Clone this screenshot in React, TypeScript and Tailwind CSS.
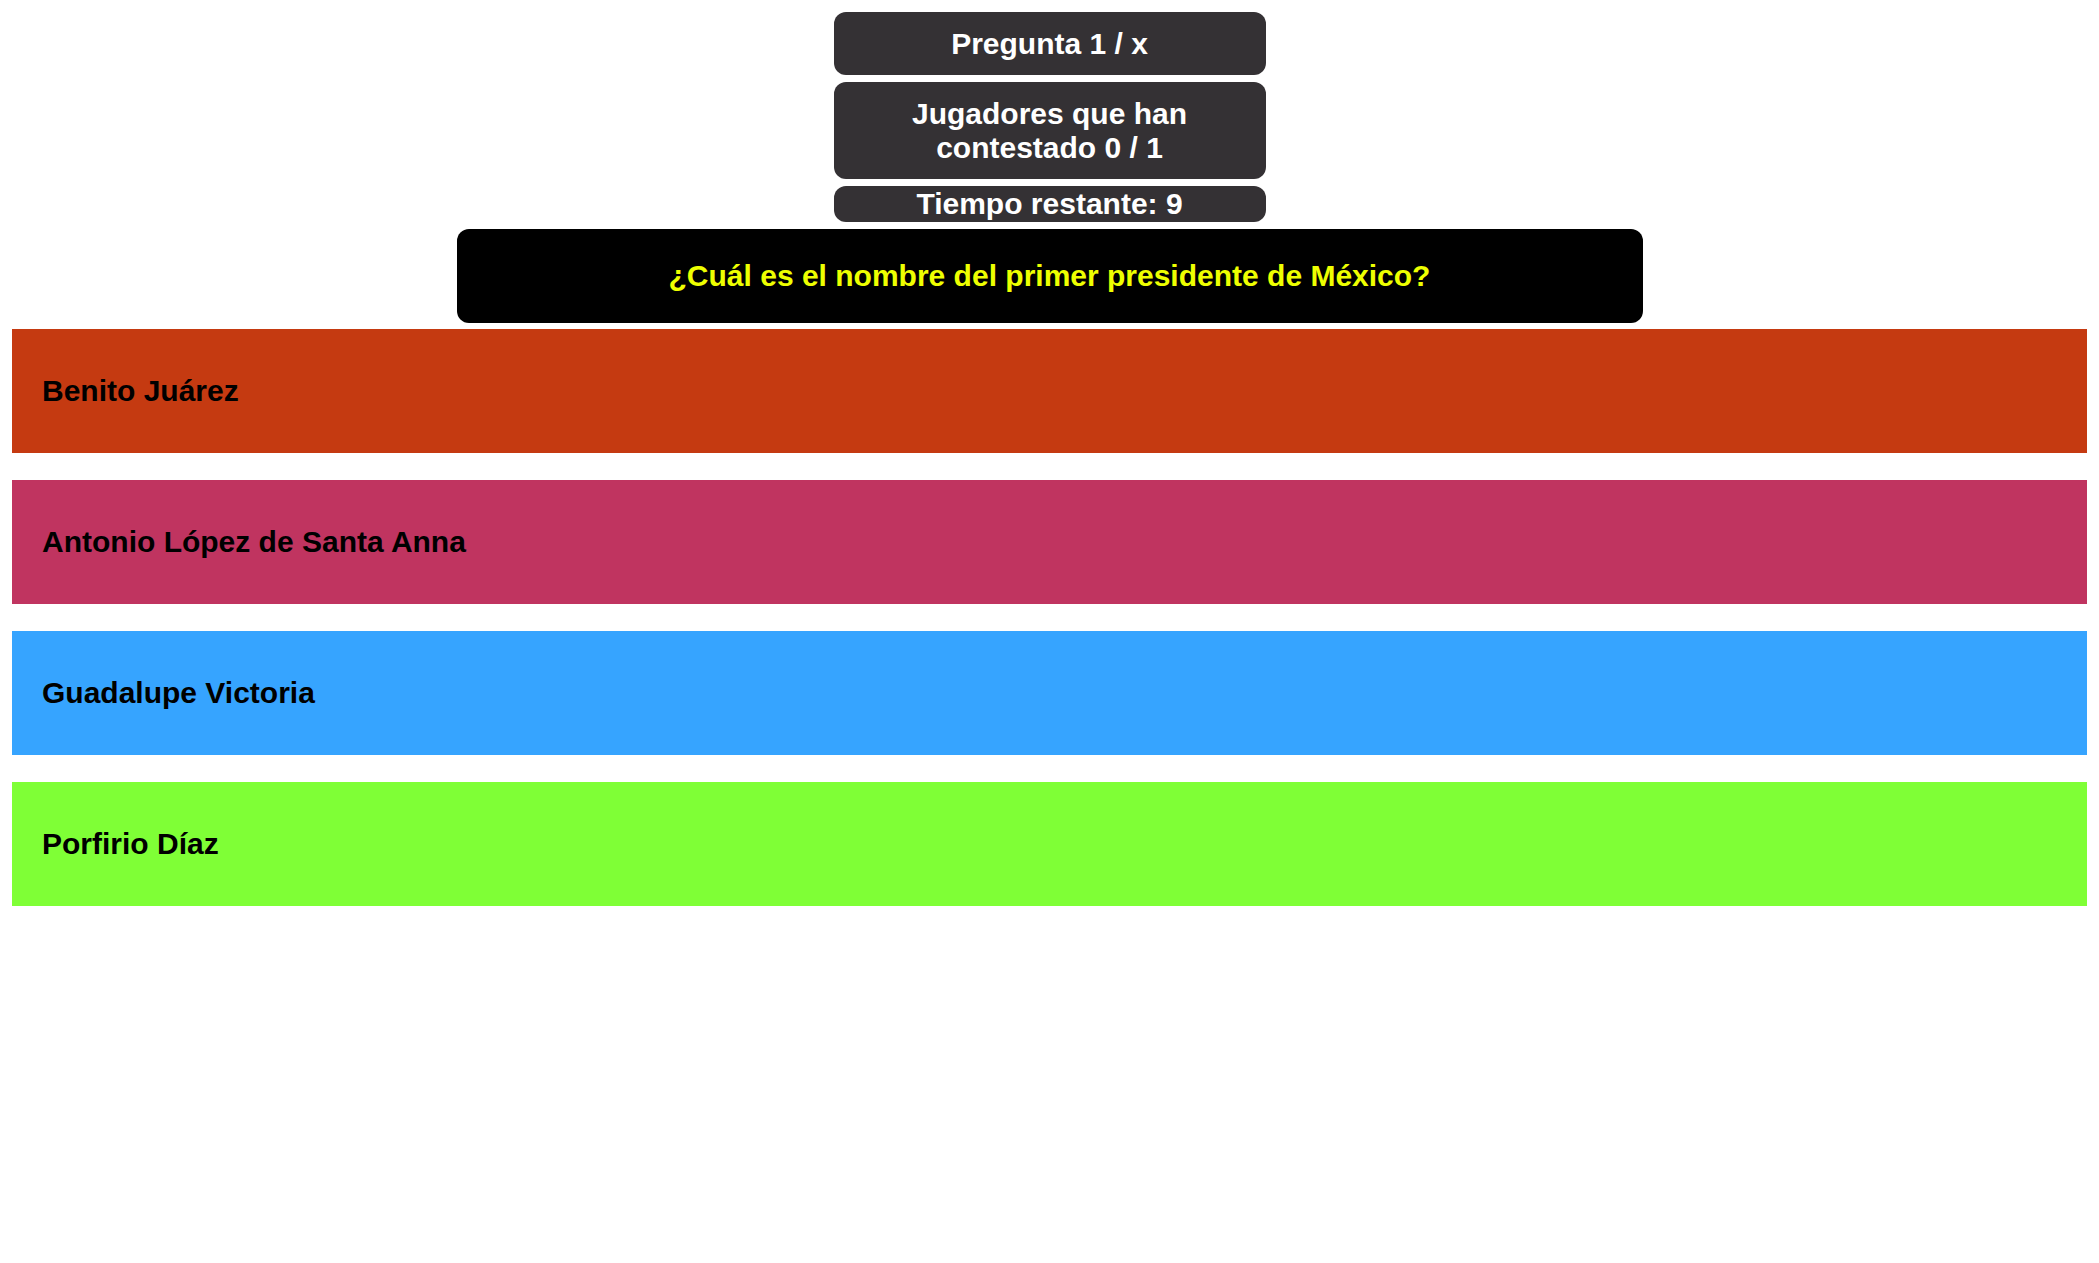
const answers = [
  { text: "Benito Juárez", color: "bg-[#c53a11]" },
  { text: "Antonio López de Santa Anna", color: "bg-[#c03460]" },
  { text: "Guadalupe Victoria", color: "bg-[#36a4ff]" },
  { text: "Porfirio Díaz", color: "bg-[#7fff36]" },
];

export default function App() {
  return (
    <div className="min-h-screen bg-white p-[12px] font-['Liberation_Sans',Arial,sans-serif] text-[30px] font-bold leading-[34px]">
      <div className="flex flex-col items-center gap-[7px]">
        <div className="w-[432px] rounded-[12px] bg-[#343134] py-[14.5px] text-center text-white">
          Pregunta 1 / x
        </div>
        <div className="w-[432px] rounded-[12px] bg-[#343134] py-[14.5px] text-center text-white">
          Jugadores que han
          <br />
          contestado 0 / 1
        </div>
        <div className="w-[432px] rounded-[12px] bg-[#343134] py-px text-center text-white">
          Tiempo restante: 9
        </div>
        <div className="w-[1186px] rounded-[12px] bg-black py-[30px] text-center text-[#eeff00]">
          ¿Cuál es el nombre del primer presidente de México?
        </div>
      </div>
      <div className="mt-[6px] flex flex-col gap-[27px]">
        {answers.map((a) => (
          <div key={a.text} className={`${a.color} px-[30px] py-[45px] text-black`}>
            {a.text}
          </div>
        ))}
      </div>
    </div>
  );
}
